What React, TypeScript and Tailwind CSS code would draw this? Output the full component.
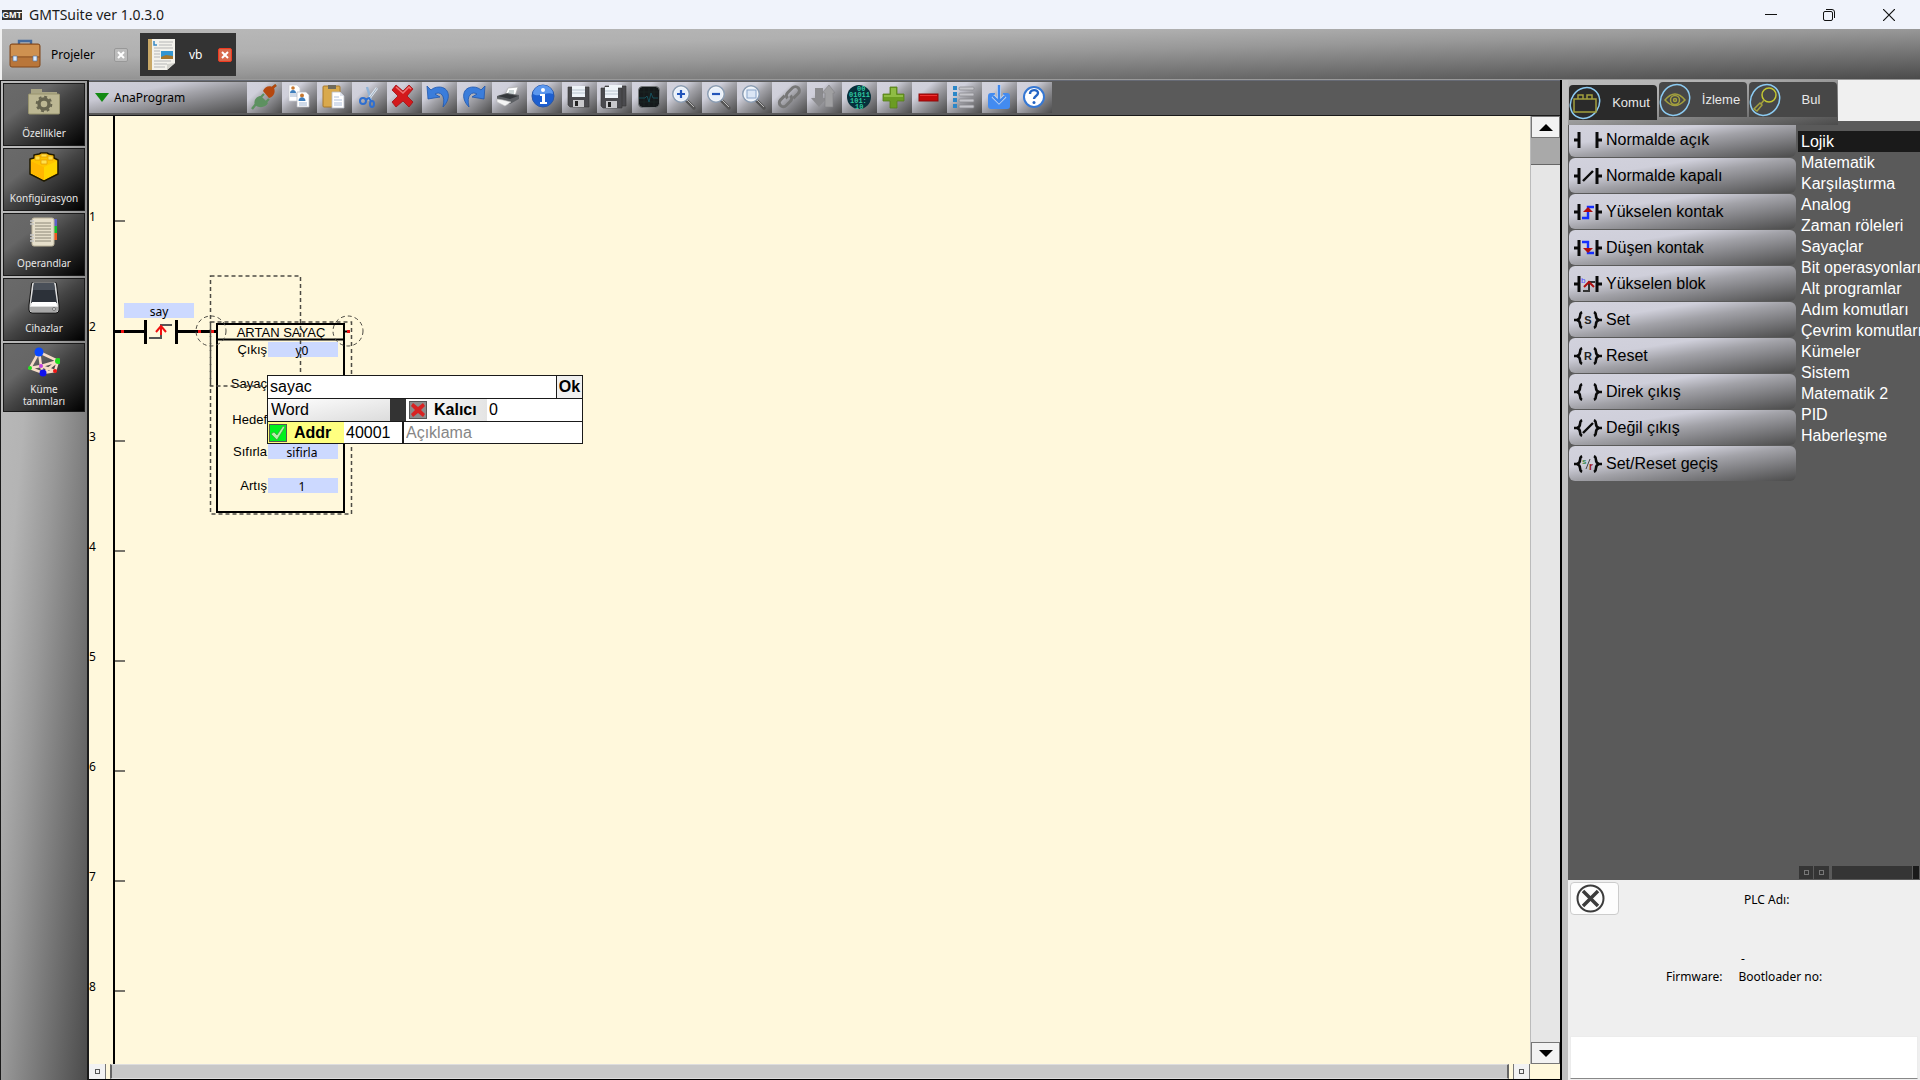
import React from 'react';
import { clsx } from 'clsx';

const UI_FONT = "font-['Noto_Sans',sans-serif]";
const ARIAL = "font-['Liberation_Sans',Arial,sans-serif]";

/* ---------- toolbar icons, all on a 35x31 grid ---------- */

function DiskShape() {
  return (
    <>
      <path d="M0 1h21v20H2l-2-2z" fill="#4a4a4e" stroke="#333" strokeWidth=".6" />
      <path d="M4 0h13v11H4z" fill="#eef3f8" />
      <path d="M4 4h13M4 7h13" stroke="#b9c4cf" />
      <path d="M5 14h11v7H5z" fill="#c9c9cc" />
      <path d="M7 15h3v5H7z" fill="#222" />
    </>
  );
}

function Lens({ children }: { children?: React.ReactNode }) {
  return (
    <>
      <path d="M19 18l8 8" stroke="#555" strokeWidth="3.4" strokeLinecap="round" />
      <path d="M20 18l7 7" stroke="#bbb" strokeWidth="1" />
      <circle cx="14" cy="12" r="8" fill="#e8f0fb" stroke="#8b9db3" strokeWidth="2" />
      <circle cx="14" cy="12" r="7" fill="none" stroke="#fff" strokeWidth="1" />
      {children}
    </>
  );
}

const toolIcons: { name: string; art: React.ReactNode }[] = [
  {
    name: 'Bağlan',
    art: (
      <>
        <path d="M5 27l4-5M24 7l5-4" stroke="#5d9160" strokeWidth="2.4" />
        <path d="M8 23c-2-5 2-9 6-9l7 7c-2 4-8 6-13 2z" fill="#5d9160" />
        <path d="M14 15l3-3M19 20l3-3" stroke="#5d9160" strokeWidth="2.2" />
        <path d="M24 7l5-4" stroke="#b5470f" strokeWidth="2.4" />
        <path d="M16 9c2-5 7-6 11-3 2 5-1 9-5 10z" fill="#b5470f" />
      </>
    ),
  },
  {
    name: 'Kopyala',
    art: (
      <>
        <path d="M7 3h8l3 3v13H7z" fill="#fff" stroke="#c5c8d0" strokeWidth=".7" />
        <path d="M8 12h8M8 14h8" stroke="#9fb4d0" />
        <circle cx="11" cy="6" r="1.8" fill="#c7772e" />
        <path d="M8 11c0-4 6-4 6 0z" fill="#3f7fbd" />
        <path d="M15 10h9l3 3v12H15z" fill="#fff" stroke="#b5b8c0" strokeWidth=".7" />
        <path d="M17 21h8M17 23h8" stroke="#9fb4d0" />
        <circle cx="20" cy="13.500" r="2" fill="#c7772e" />
        <path d="M16.500 19c0-5 7-5 7 0z" fill="#3f7fbd" />
      </>
    ),
  },
  {
    name: 'Yapıştır',
    art: (
      <>
        <rect x="6" y="4" width="17" height="21" rx="1" fill="#d9a94c" stroke="#a8792a" />
        <rect x="11" y="3" width="8" height="4" fill="#6f6a5c" />
        <path d="M15 10h8l4 4v12H15z" fill="#fff" stroke="#b8bcc6" strokeWidth=".8" />
        <path d="M23 10v4h4" fill="#dfe4ee" />
        <path d="M17 15h5M17 18h8M17 21h8M17 23h8" stroke="#aebfda" />
      </>
    ),
  },
  {
    name: 'Kes',
    art: (
      <>
        <path d="M15 5l4 13" stroke="#8fb3d9" strokeWidth="2.4" />
        <path d="M25 6l-9 12" stroke="#dfe8f2" strokeWidth="2.600" />
        <path d="M25 6l-8 11" stroke="#8294a8" strokeWidth=".7" />
        <circle cx="11" cy="19" r="3" fill="none" stroke="#2f6fd0" strokeWidth="2" />
        <ellipse cx="20" cy="22" rx="2" ry="3" fill="none" stroke="#2f6fd0" strokeWidth="2" />
        <path d="M13 18l4-2 2 3" stroke="#2f6fd0" strokeWidth="2" fill="none" />
      </>
    ),
  },
  {
    name: 'Sil',
    art: (
      <>
        <path d="M9 3l7 6 6-6 4 4-6 7 6 6-4 5-6-6-7 6-4-5 6-6-6-6z" fill="#d3191c" stroke="#9f1114" strokeWidth=".8" />
        <path d="M9 5l7 6 6-6 2 2" fill="none" stroke="#ee7474" strokeWidth="1.500" />
      </>
    ),
  },
  {
    name: 'Geri al',
    art: (
      <path d="M5 4l1 13 12-2-5-3c5-3 11 1 8 13 9-9 6-20-4-20-3 0-6 1-8 3z" fill="#3b7ddb" stroke="#1f57ad" strokeWidth=".8" />
    ),
  },
  {
    name: 'Yinele',
    art: (
      <path d="M28 4l-1 13-12-2 5-3c-5-3-11 1-8 13-9-9-6-20 4-20 3 0 6 1 8 3z" fill="#3b7ddb" stroke="#1f57ad" strokeWidth=".8" />
    ),
  },
  {
    name: 'Yazdır',
    art: (
      <>
        <path d="M16 6l10-1-3 9-10-1z" fill="#fff" stroke="#aaa" strokeWidth=".7" />
        <path d="M17 9h5M16 11h6" stroke="#9aa" />
        <path d="M5 14l10-3 12 2v4l-9 5-13-4z" fill="#5c5f63" />
        <path d="M6 14l9-2 11 2-8 3z" fill="#34373b" />
        <path d="M5 17l6 1 8 2-6 4-8-4z" fill="#f4f4f4" stroke="#bbb" strokeWidth=".6" />
      </>
    ),
  },
  {
    name: 'Bilgi',
    art: (
      <>
        <circle cx="16" cy="14" r="11" fill="#1d5fd0" stroke="#2a57a5" />
        <path d="M6 12a10 9 0 0 1 20 0c-6-3-14 4-20 0z" fill="#5b97ee" />
        <circle cx="16" cy="8" r="2" fill="#fff" />
        <path d="M13 12h5v8h2v2h-7v-2h2v-6h-2z" fill="#fff" />
      </>
    ),
  },
  { name: 'Kaydet', art: <g transform="translate(6 4)"><DiskShape /></g> },
  {
    name: 'Tümünü kaydet',
    art: (
      <>
        <g transform="translate(8 3)"><DiskShape /></g>
        <g transform="translate(4 5)"><DiskShape /></g>
      </>
    ),
  },
  {
    name: 'Osiloskop',
    art: (
      <>
        <rect x="6.500" y="4.500" width="21" height="21" rx="4" fill="#15191b" stroke="#74787a" />
        <path d="M12 6v18M17 6v18M22 6v18M8 10h18M8 20h18" stroke="#1d2625" strokeWidth=".8" />
        <path d="M7 16h6l2-2 2 6 2-9 2 5h5" fill="none" stroke="#175a68" strokeWidth=".8" />
      </>
    ),
  },
  { name: 'Yakınlaştır', art: <Lens><path d="M10 12h8M14 8v8" stroke="#2255bb" strokeWidth="2.200" /></Lens> },
  { name: 'Uzaklaştır', art: <Lens><path d="M10 12h8" stroke="#2255bb" strokeWidth="2.200" /></Lens> },
  { name: 'Sığdır', art: <Lens><rect x="10" y="8" width="9" height="8" fill="#dbe6f5" stroke="#8aa4c8" /></Lens> },
  {
    name: 'Bağlantı',
    art: (
      <g fill="none" stroke="#777" strokeWidth="3" transform="rotate(-45 17 15)">
        <path d="M15 11H9a4 4 0 0 0 0 8h6a4 4 0 0 0 4-4" />
        <path d="M19 19h7a4 4 0 0 0 0-8h-7a4 4 0 0 0-4 4" />
      </g>
    ),
  },
  {
    name: 'Aktar',
    art: (
      <>
        <path d="M8 6h8v10h4l-8 9-8-9h4z" fill="#8b8b8e" />
        <path d="M18 25V11h-3l7-8 6 8h-2v14z" fill="#a0a0a2" stroke="#808083" strokeWidth=".6" />
      </>
    ),
  },
  {
    name: 'Derle',
    art: (
      <>
        <circle cx="17" cy="15" r="12" fill="#06303b" />
        <text fill="#2fc7a0" fontSize="7" fontWeight="bold" fontFamily="Liberation Mono, monospace">
          <tspan x="15" y="9">00</tspan>
          <tspan x="7" y="15">01011</tspan>
          <tspan x="8" y="21">101:</tspan>
          <tspan x="13" y="27">10</tspan>
        </text>
      </>
    ),
  },
  {
    name: 'Ekle',
    art: (
      <>
        <path d="M13 5h7v7h7v7h-7v7h-7v-7H6v-7h7z" fill="#6b9c22" stroke="#557d1a" strokeWidth=".8" />
        <path d="M14 6h5v7h7v2H7v-2h7z" fill="#8fbc45" />
      </>
    ),
  },
  {
    name: 'Çıkar',
    art: (
      <>
        <rect x="7" y="12" width="19" height="7" fill="#c40808" stroke="#8e0a0a" />
        <path d="M8 13h17v1H8z" fill="#e33" />
      </>
    ),
  },
  {
    name: 'Liste',
    art: (
      <>
        {[4, 10, 16, 22].map((y) => (
          <g key={y}>
            <rect x="6" y={y} width="4" height="4" fill="#2b87c8" />
            <rect x="12" y={y + 1} width="15" height="3" rx="1" fill="#c5c5ca" stroke="#8c8c90" strokeWidth=".8" />
          </g>
        ))}
      </>
    ),
  },
  {
    name: 'İndir',
    art: (
      <>
        <path d="M9 11h4v7l4 4 4-4v-7h4q3 0 3 3v10q0 3-3 3H9q-3 0-3-3V14q0-3 3-3z" fill="#438bf0" />
        <path d="M17 3v17M11 14l6 6 6-6" fill="none" stroke="#c9d8f0" strokeWidth="4" />
        <path d="M17 3v17M11 14l6 6 6-6" fill="none" stroke="#3f86ea" strokeWidth="2.400" />
      </>
    ),
  },
  {
    name: 'Yardım',
    art: (
      <>
        <circle cx="17" cy="15" r="10" fill="#fff" stroke="#3678d4" strokeWidth="2" />
        <path d="M13 12c0-5 8-5 8-1 0 3-4 3-4 6" fill="none" stroke="#2464c4" strokeWidth="2.400" />
        <circle cx="17" cy="20.500" r="1.500" fill="#2464c4" />
      </>
    ),
  },
];

/* ---------- sidebar ---------- */

const sideItems: { label: string; art: React.ReactNode }[] = [
  {
    label: 'Özellikler',
    art: (
      <>
        <path d="M3 2h11v3h15v4H3z" fill="#a9a585" />
        <rect x=".5" y="7" width="31" height="20" rx="1" fill="#bcb793" stroke="#98946f" />
        <circle cx="16" cy="17" r="5" fill="none" stroke="#66644f" strokeWidth="3.400" />
        <circle cx="16" cy="17" r="7.300" fill="none" stroke="#66644f" strokeWidth="2" strokeDasharray="2.900 2.830" />
      </>
    ),
  },
  {
    label: 'Konfigürasyon',
    art: (
      <>
        <path d="M2 7l4-1V3l5-1 2-1h6l2 1 5 1v3l4 2v14l-14 7L2 22z" fill="#ffc400" stroke="#201a00" strokeWidth="1.500" strokeLinejoin="round" />
        <path d="M3 9l13 6 13-6v12l-13 7-13-7z" fill="#ffd400" />
        <path d="M3 9l13 6v13L3 21z" fill="#ffb700" />
        <path d="M7 4h5v4H7zM13 2h6v3h-6zM20 4h5v4h-5zM13 8h6v4h-6z" fill="#ffe04a" stroke="#e09a00" strokeWidth=".7" />
      </>
    ),
  },
  {
    label: 'Operandlar',
    art: (
      <>
        <rect x="25" y="2" width="4" height="7" fill="#5d62c8" />
        <rect x="25" y="9" width="4" height="7" fill="#12c12c" />
        <rect x="25" y="16" width="4" height="7" fill="#f05a1e" />
        <rect x="4" y="1" width="22" height="28" rx="2" fill="#e6dfcb" stroke="#bdb49b" />
        <path d="M7 6h16M7 9h16M7 12h16M7 15h16M7 18h16M7 21h16M7 24h16" stroke="#857f70" strokeWidth=".9" />
        <path d="M2 4h4M2 7h4M2 18h4M2 21h4M2 24h4" stroke="#c6c6c6" strokeWidth="1.500" />
      </>
    ),
  },
  {
    label: 'Cihazlar',
    art: (
      <>
        <path d="M5 0h22q1 0 1.500 2L31 23v5q0 3-3 3H4q-3 0-3-3v-5L3.500 2Q4 0 5 0z" fill="#ddd" stroke="#111" />
        <path d="M6 1h20l3 20H3z" fill="#2c3139" />
        <path d="M6 1h20l1 7H5z" fill="#4a5059" />
        <path d="M4 20h24l1 4H3z" fill="#fff" />
        <path d="M2 25h28v3q0 2-2 2H4q-2 0-2-2z" fill="#a8a8a8" />
        <circle cx="26" cy="27" r="1.500" fill="#ddd" stroke="#555" strokeWidth=".7" />
      </>
    ),
  },
  {
    label: 'Küme tanımları',
    art: (
      <>
        <path d="M11 5L2 21l13 5 12-2 3-10zM11 5l2 14 14 5M13 19l17-5M2 21l11-2 2 7 15-12" fill="none" stroke="#f6dcc8" strokeWidth="2.600" />
        <circle cx="11" cy="5" r="4.500" fill="#0a49ff" />
        <circle cx="30" cy="14" r="3" fill="#20e01c" />
        <circle cx="2" cy="21" r="2" fill="#20e01c" />
        <circle cx="15" cy="26" r="3.500" fill="#1010ee" />
        <circle cx="27" cy="24" r="2" fill="#f01414" />
        <circle cx="13" cy="19" r="2" fill="#c040e0" />
      </>
    ),
  },
];

/* ---------- command list ---------- */

const contact = <path d="M0 9h5M5 1v16M28 9h-5M23 1v16" stroke="#0a0a0a" strokeWidth="3" fill="none" />;
const coil = (
  <path
    d="M8 1Q6 2 6 5T3 9q3 1 3 4t2 4M0 9h4M20 1q2 1 2 4t3 4q-3 1-3 4t-2 4M28 9h-4"
    stroke="#0a0a0a"
    strokeWidth="2.600"
    fill="none"
  />
);

const commands: { label: string; art: React.ReactNode }[] = [
  { label: 'Normalde açık', art: contact },
  { label: 'Normalde kapalı', art: <>{contact}<path d="M9 14L19 4" stroke="#0a0a0a" strokeWidth="2.400" /></> },
  {
    label: 'Yükselen kontak',
    art: <>{contact}<path d="M8 15h6V4h6" stroke="#1530ff" strokeWidth="2.400" fill="none" /><path d="M9 9h10l-5-5z" fill="#b01010" /></>,
  },
  {
    label: 'Düşen kontak',
    art: <>{contact}<path d="M8 3h6v11h6" stroke="#1530ff" strokeWidth="2.400" fill="none" /><path d="M9 9h10l-5 5z" fill="#b01010" /></>,
  },
  {
    label: 'Yükselen blok',
    art: (
      <>
        {contact}
        <path d="M9 16h6V7h6" stroke="#333" strokeWidth="2" fill="none" />
        <path d="M10 12l5-5 5 5" stroke="#b01010" strokeWidth="2" fill="none" />
        <text x="7" y="8" fontSize="8" fill="#4a4aff">b</text>
      </>
    ),
  },
  { label: 'Set', art: <>{coil}<text x="14" y="13" fontSize="11" fontWeight="bold" textAnchor="middle" fill="#222">S</text></> },
  { label: 'Reset', art: <>{coil}<text x="14" y="13" fontSize="11" fontWeight="bold" textAnchor="middle" fill="#222">R</text></> },
  { label: 'Direk çıkış', art: coil },
  { label: 'Değil çıkış', art: <>{coil}<path d="M9 14L19 4" stroke="#0a0a0a" strokeWidth="2.400" /></> },
  {
    label: 'Set/Reset geçiş',
    art: (
      <>
        {coil}
        <text x="8" y="9" fontSize="8" fontWeight="bold" fill="#3b8a4a">s</text>
        <path d="M12 14l4-10" stroke="#444" />
        <text x="15" y="15" fontSize="10" fontWeight="bold" fill="#a01818">r</text>
      </>
    ),
  },
];

const categories = [
  'Lojik', 'Matematik', 'Karşılaştırma', 'Analog', 'Zaman röleleri', 'Sayaçlar', 'Bit operasyonları', 'Alt programlar',
  'Adım komutları', 'Çevrim komutları', 'Kümeler', 'Sistem', 'Matematik 2', 'PID', 'Haberleşme',
];

const panelTabs: { label: string; art: React.ReactNode }[] = [
  { label: 'Komut', art: <path d="M5 13h22v13H5zM9 13V9h5v4M18 13V9h5v4" /> },
  {
    label: 'İzleme',
    art: <><path d="M6 17q10-12 20 0-10 11-20 0z" /><circle cx="16" cy="17" r="4.500" /><circle cx="16" cy="17" r="1.500" /></>,
  },
  {
    label: 'Bul',
    art: <><circle cx="20" cy="12" r="7" stroke="#c3c832" /><path d="M15 17l-3 4M11 20l2 2-5 6-3-2z" /></>,
  },
];

function TitleBar() {
  return (
    <header className="flex h-[29px] shrink-0 items-center bg-[#f0f3fb] pl-0.5">
      <svg width="20" height="10" viewBox="0 0 20 10" className="mr-[7px]">
        <rect width="20" height="10" fill="#333" />
        <text x="10" y="8" fontSize="9" fontWeight="bold" textAnchor="middle" fill="#fff" className={ARIAL}>GMT</text>
      </svg>
      <h1 className="text-sm text-[#1a1a1a]">GMTSuite ver 1.0.3.0</h1>
      <div className="ml-auto flex h-full">
        <button aria-label="Küçült" className="flex w-[58px] items-center justify-center">
          <svg width="12" height="12"><path d="M0 5.500h12" stroke="#111" /></svg>
        </button>
        <button aria-label="Önceki boyut" className="flex w-[58px] items-center justify-center">
          <svg width="12" height="12" fill="none" stroke="#111">
            <rect x=".5" y="2.500" width="9" height="9" rx="1.500" />
            <path d="M3 .5h6q2.500 0 2.500 2.500v6" />
          </svg>
        </button>
        <button aria-label="Kapat" className="flex w-[62px] items-center justify-center">
          <svg width="12" height="12" stroke="#111" strokeWidth="1.200"><path d="M0 0l12 12M12 0L0 12" /></svg>
        </button>
      </div>
    </header>
  );
}

function CloseTab({ active }: { active?: boolean }) {
  return (
    <button
      aria-label="Sekmeyi kapat"
      className={clsx(
        'flex size-3.5 items-center justify-center rounded-xs border',
        active ? 'border-[#f03a20] bg-[#d8694c]' : 'border-[#989898] bg-[#bcbcbc]',
      )}
    >
      <svg width="8" height="8" stroke="#fff" strokeWidth="2"><path d="M1 1l6 6M7 1L1 7" /></svg>
    </button>
  );
}

function ProjectTabs() {
  return (
    <nav className="ml-0.5 flex h-[51px] shrink-0 border-b border-[#999] bg-[linear-gradient(to_bottom_right,#b9b9b9,#b0b0b0_30%,#989898_50%,#4b4b4b)] text-xs">
      <div className="mt-1 flex h-[43px] w-[138px] items-center pl-[7px]">
        <svg width="32" height="32" viewBox="0 0 32 32">
          <path d="M10 7V2h12v5" fill="none" stroke="#456a9c" strokeWidth="2.400" />
          <rect x="1" y="5" width="30" height="23" rx="2" fill="#b9763a" stroke="#80471a" />
          <path d="M2 6h28v11H2z" fill="#cf9150" />
          <path d="M1 18h30" stroke="#8e5524" />
          <path d="M4 17h4v5H4zM24 17h4v5h-4z" fill="#dcebff" stroke="#5578a8" strokeWidth=".7" />
        </svg>
        <button className="ml-[10px] pt-px">Projeler</button>
        <span className="mr-3 ml-auto flex"><CloseTab /></span>
      </div>
      <div className="mt-1 flex h-[43px] w-24 items-center bg-[#333] pl-2 text-white">
        <svg width="27" height="32" viewBox="0 0 27 32">
          <path d="M1 0h26v24l-8 7H1z" fill="#f3f2ec" />
          <path d="M0 0h4v31H0z" fill="#c9a866" />
          <path d="M11 3h14M11 6h13M6 9h19M6 12h6M6 15h6M6 18h6M6 22h17M6 25h13M6 28h11" stroke="#b5b5b5" strokeWidth="1.200" />
          <path d="M6 2v4h3" stroke="#3a8bc4" fill="none" strokeWidth="1.500" />
          <path d="M13 12h12v8H13z" fill="#3295d2" />
          <path d="M13 18l5-2 7 1v3H13z" fill="#a5762c" />
          <path d="M19 31v-6l8-1z" fill="#d2d2cc" />
        </svg>
        <button className="ml-[14px] pt-px">vb</button>
        <span className="mr-1 ml-auto flex"><CloseTab active /></span>
      </div>
    </nav>
  );
}

function Sidebar() {
  return (
    <aside className="flex w-[89px] shrink-0 flex-col gap-0.5 border-t border-r-2 border-l border-[#1a1a1a] bg-[linear-gradient(to_bottom_right,#bcbcbc,#b4b4b4_30%,#999_50%,#4b4b4b)] p-0.5">
      {sideItems.map((item, i) => (
        <button
          key={item.label}
          className={clsx(
            'flex w-full flex-col items-center border border-[#1a1a1a] bg-[linear-gradient(to_bottom_right,#6a6a6a,#666_30%,#444_50%,#000)] pt-[3px] text-[10px] leading-3 text-[#e8e8e8]',
            i === 4 ? 'h-[69px] gap-1 px-4' : 'h-[63px] gap-2',
          )}
        >
          <svg width="32" height="32" viewBox="0 0 32 32" className="shrink-0">{item.art}</svg>
          {item.label}
        </button>
      ))}
    </aside>
  );
}

function Toolbar() {
  return (
    <div className="flex h-9 shrink-0 border-y border-t-[#666a75] border-b-[#1a1a1a] bg-[#5a5a5a] pt-px">
      <button className="flex h-[31px] w-[158px] items-center bg-[linear-gradient(to_bottom_right,#cfcfda,#c9c9d4_30%,#a2a2a8_50%,#4b4b4b)] pt-px pl-1.5 text-xs text-black">
        <svg width="14" height="10" className="mr-[5px]"><path d="M0 0h14L7 9z" fill="#138a13" /></svg>
        AnaProgram
      </button>
      {toolIcons.map((tool) => (
        <button
          key={tool.name}
          aria-label={tool.name}
          className="h-[31px] w-[35px] shrink-0 bg-[linear-gradient(to_bottom_right,#d2d2dd,#cfcfda_30%,#a2a2a8_50%,#4b4b4b)]"
        >
          <svg width="35" height="31" viewBox="0 0 35 31">{tool.art}</svg>
        </button>
      ))}
    </div>
  );
}

const blockLabels = [
  { text: 'Çıkış', y: 238 },
  { text: 'Sayaç', y: 272 },
  { text: 'Hedef', y: 308 },
  { text: 'Sıfırla', y: 340 },
  { text: 'Artış', y: 374 },
];

const blockValues = [
  { text: 'y0', y: 226 },
  { text: 'sifirla', y: 328 },
  { text: '1', y: 362 },
];

function Ladder() {
  return (
    <svg className="absolute inset-0 h-full w-full text-xs">
      <path d="M25 0v2000" stroke="#000" strokeWidth="2" />
      {[1, 2, 3, 4, 5, 6, 7, 8].map((n) => (
        <g key={n}>
          <text x="0" y={110 * n - 5}>{n}</text>
          {n !== 2 && <path d={`M26 ${110 * n - 5}h10`} stroke="#77746a" strokeWidth="2" />}
        </g>
      ))}

      {/* rising edge contact */}
      <path d="M26 215.500h30M88 215.500h40" stroke="#000" strokeWidth="3" />
      <path d="M56.500 204v24M87.500 204v24" stroke="#000" strokeWidth="3" />
      <path d="M60 222h12v-13h11" fill="none" stroke="#555" strokeWidth="2" />
      <path d="M72 219v-9M67 216l5-6 5 6" fill="none" stroke="#f01010" strokeWidth="2" />
      <rect x="35" y="187" width="70" height="15" fill="#ccd9ff" />
      <text x="70" y="200" textAnchor="middle">say</text>

      {/* counter block */}
      <path d="M128 208h127v188H128zM128 223.500h127M255 215.500h5" fill="none" stroke="#000" strokeWidth="2" />
      <text x="192" y="221" textAnchor="middle" className={`text-[13px] ${ARIAL}`}>ARTAN SAYAÇ</text>
      {blockLabels.map((l) => (
        <text key={l.text} x="178" y={l.y} textAnchor="end" className={`text-[13px] ${ARIAL}`}>{l.text}</text>
      ))}
      {blockValues.map((v) => (
        <g key={v.text}>
          <rect x="179" y={v.y} width="70" height="15" fill="#ccd9ff" />
          <text x="213" y={v.y + 13} textAnchor="middle">{v.text}</text>
        </g>
      ))}
      {[32, 109, 122, 258].map((x) => (
        <rect key={x} x={x} y="214" width="3" height="3" fill="#f01010" />
      ))}

      {/* selection outlines */}
      <g fill="none" stroke="#4d4b44" strokeDasharray="4 3">
        <path d="M121.500 160h90v110h-90z" strokeWidth="1.500" />
        <path d="M121.500 206h141v192h-141z" strokeWidth="1.500" />
        <circle cx="122" cy="215" r="15" />
        <circle cx="259" cy="215" r="15" />
      </g>
    </svg>
  );
}

function OperandForm() {
  return (
    <form
      onSubmit={(e) => e.preventDefault()}
      className={`absolute top-[259px] left-[178px] w-[316px] border border-[#1a1a1a] bg-white text-base leading-5 ${ARIAL}`}
    >
      <div className="flex h-[23px] border-b border-[#1a1a1a]">
        <input aria-label="Operand" defaultValue="sayac" className="w-0 grow px-0.5 outline-none" />
        <button className="w-[26px] border-l border-[#1a1a1a] bg-[#f0f0f0] font-bold">Ok</button>
      </div>
      <div className="flex h-[23px] border-b border-[#1a1a1a]">
        <select aria-label="Tip" className="w-[122px] appearance-none bg-linear-to-br from-white to-[#dcdcdc] px-[3px] outline-none">
          <option>Word</option>
        </select>
        <span className="w-4 bg-[#333]" />
        <label className="flex w-[81px] items-center bg-linear-to-r from-white to-[#e4e4e4] pl-[3px] font-bold">
          <span className="relative mr-[7px] size-[18px]">
            <input type="checkbox" className="block size-full appearance-none border border-[#555] bg-[#8c8c8c]" />
            <svg viewBox="0 0 18 18" className="pointer-events-none absolute inset-0">
              <path d="M4 2l5 4 5-4 2 3-4 4 4 4-2 3-5-4-5 4-2-3 4-4-4-4z" fill="#d82222" />
            </svg>
          </span>
          Kalıcı
        </label>
        <input aria-label="Değer" defaultValue="0" className="w-0 grow px-0.5 outline-none" />
      </div>
      <div className="flex h-[21px]">
        <label className="flex w-[76px] items-center bg-[#ffff80] pl-px font-bold">
          <span className="relative mr-[7px] size-[18px]">
            <input type="checkbox" defaultChecked className="block size-full appearance-none border border-[#555] bg-[#00f21c]" />
            <svg viewBox="0 0 18 18" className="pointer-events-none absolute inset-0">
              <path d="M2 10l3-2 3 3 6-9 2 1-8 13z" fill="#b5efaa" stroke="#3a9a3a" strokeWidth=".7" />
            </svg>
          </span>
          Addr
        </label>
        <input aria-label="Adres" defaultValue="40001" className="w-[60px] border-r-2 border-[#1a1a1a] px-0.5 outline-none" />
        <input aria-label="Açıklama" placeholder="Açıklama" className="w-0 grow px-0.5 outline-none placeholder:text-[#868686]" />
      </div>
    </form>
  );
}

function Editor() {
  return (
    <main className="flex min-w-0 flex-1 flex-col border-r-2 border-b border-black">
      <Toolbar />
      <div className="flex min-h-0 flex-1">
        <div className="relative min-w-0 flex-1 overflow-hidden bg-[#fff8dc]">
          <Ladder />
          <OperandForm />
        </div>
        <div className="flex w-[30px] shrink-0 flex-col border-l border-[#bbb] bg-[#e6e6e6]">
          <button aria-label="Yukarı" className="flex h-[22px] items-center justify-center border border-[#777] bg-[#f2f2f2]">
            <svg width="14" height="7"><path d="M0 7l7-7 7 7z" /></svg>
          </button>
          <div className="h-[27px] border-b border-[#666] bg-[#a9a9a9]" />
          <button aria-label="Aşağı" className="mt-auto flex h-[22px] items-center justify-center border border-[#777] bg-[#f2f2f2]">
            <svg width="14" height="7"><path d="M0 0h14L7 7z" /></svg>
          </button>
        </div>
      </div>
      <div className="flex h-[15px] shrink-0 bg-[#fff8dc] pr-[30px]">
        <button aria-label="Sola" className="flex w-[17px] items-center justify-center border-r border-[#777] bg-[#f2f2f2]">
          <span className="size-[5px] border border-[#555]" />
        </button>
        <div className="mx-1 flex-1 border-x-2 border-y border-x-[#666] border-y-[#ddd] bg-[#c8c8c8]" />
        <button aria-label="Sağa" className="flex w-[17px] items-center justify-center border-x border-[#777] bg-[#f2f2f2]">
          <span className="size-[5px] border border-[#555]" />
        </button>
      </div>
    </main>
  );
}

function CommandPanel() {
  return (
    <section className={`flex min-h-0 flex-1 flex-col bg-[#5a5a5a] ${ARIAL}`}>
      <div className="flex h-[45px] shrink-0">
        <div className="flex w-[270px] items-start gap-0.5 bg-[linear-gradient(to_bottom_right,#bcbcbc,#b0b0b0_30%,#989898_50%,#4b4b4b)] pt-0.5 pl-px">
          {panelTabs.map((tab, i) => (
            <button
              key={tab.label}
              className={clsx(
                'flex h-[35px] w-[88px] items-center rounded-t-sm text-[13px] text-[#e8e8e8]',
                i === 0 ? 'mt-[3px] bg-[#2a2a2a]' : 'bg-[#474747]',
              )}
            >
              <svg width="32" height="34" viewBox="0 0 32 34" fill="none" stroke="#a3a03e" strokeWidth="1.500" className="shrink-0">
                <ellipse cx="16" cy="17" rx="14" ry="16" transform="rotate(35 16 17)" stroke="#8ccbf2" />
                {tab.art}
              </svg>
              <span className="flex-1 pt-px pl-1 text-center">{tab.label}</span>
            </button>
          ))}
        </div>
        <div className="h-[41px] flex-1 bg-[#f0f0f0]" />
      </div>

      <div className="flex min-h-0 flex-1 text-base">
        <div className="flex w-[230px] shrink-0 flex-col gap-px pr-0.5 pl-px">
          {commands.map((cmd, i) => (
            <button
              key={cmd.label}
              className={clsx(
                'flex shrink-0 items-center bg-[linear-gradient(to_bottom_right,#d2d2dd,#cfcfda_30%,#a2a2a8_50%,#4b4b4b)] pl-[5px] text-black',
                i === 0 ? 'h-8 rounded-b-md pb-0.5' : 'h-[35px] rounded-md',
              )}
            >
              <svg width="28" height="18" viewBox="0 0 28 18" className="mr-1">{cmd.art}</svg>
              {cmd.label}
            </button>
          ))}
        </div>
        <div className="flex min-w-0 flex-1 flex-col overflow-hidden pt-1.5">
          <ul className="text-white">
            {categories.map((name, i) => (
              <li key={name} className={clsx('h-[21px] leading-[21px]', i === 0 && 'bg-[#1a1a1a]')}>
                <button className="w-full pl-[3px] text-left whitespace-nowrap">{name}</button>
              </li>
            ))}
          </ul>
          <div className="mt-auto mb-px flex h-[13px] gap-px pl-px">
            <span className="flex w-3.5 items-center justify-center bg-[#353535]"><i className="size-[5px] border border-[#777]" /></span>
            <span className="mr-0.5 flex w-[15px] items-center justify-center bg-[#353535]"><i className="size-[5px] border border-[#777]" /></span>
            <span className="flex-1 bg-[#353535]" />
            <span className="mr-px w-1.5 bg-[#1a1a1a]" />
          </div>
        </div>
      </div>
    </section>
  );
}

function DevicePanel() {
  return (
    <section className="flex h-[200px] shrink-0 flex-col bg-[#efefef] px-0.5 pt-0.5 pb-px text-xs text-black">
      <div className="flex">
        <button aria-label="Bağlantıyı kes" className="flex h-[33px] w-[49px] items-center rounded-sm border border-[#ccc] bg-[#fdfdfd] pl-[5px]">
          <svg width="29" height="29" viewBox="0 0 29 29" fill="none" stroke="#3c3c3c">
            <circle cx="14.500" cy="14.500" r="13" strokeWidth="2" />
            <path d="M7 7l15 15M22 7L7 22" strokeWidth="3.500" />
          </svg>
        </button>
        <span className="ml-[125px] pt-[10px] leading-4">PLC Adı:</span>
      </div>
      <span className="mt-9 pl-[171px] leading-4">-</span>
      <div className="mt-0.5 flex gap-4 pl-24 leading-4">
        <span>Firmware:</span>
        <span>Bootloader no:</span>
      </div>
      <textarea aria-label="Mesajlar" className="mt-auto h-[43px] w-full resize-none border border-[#ececec] border-b-[#888] bg-white outline-none" />
    </section>
  );
}

export default function App() {
  return (
    <div className={`flex h-screen flex-col overflow-hidden bg-[#f0f0f0] ${UI_FONT}`}>
      <TitleBar />
      <ProjectTabs />
      <div className="flex min-h-0 flex-1">
        <Sidebar />
        <Editor />
        <div className="w-1.5 shrink-0 bg-[#c0c0c0]" />
        <aside className="flex w-[352px] shrink-0 flex-col">
          <CommandPanel />
          <DevicePanel />
        </aside>
      </div>
    </div>
  );
}
